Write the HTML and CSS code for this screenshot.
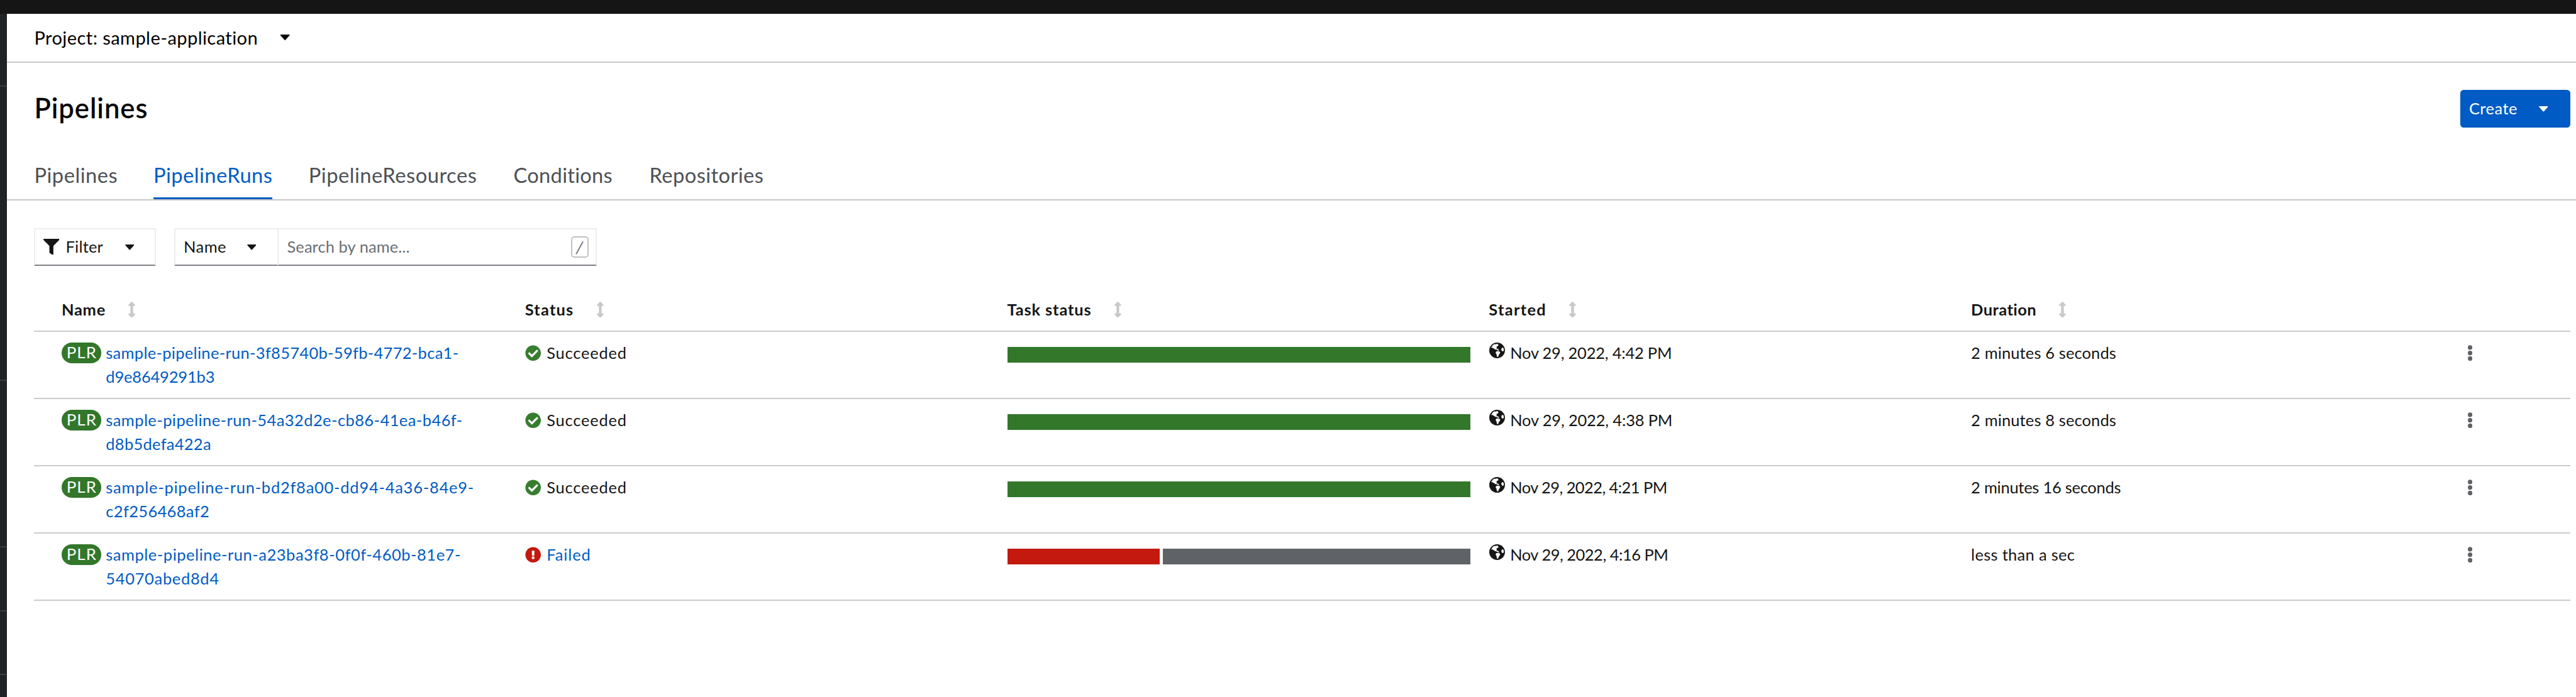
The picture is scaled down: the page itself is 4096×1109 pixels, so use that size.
FILE: index.html
```html
<!DOCTYPE html>
<html lang="en">
<head>
<meta charset="utf-8">
<title>Pipelines</title>
<link rel="stylesheet" href="styles.css">
</head>
<body>
<svg class="sprite" aria-hidden="true">
  <symbol id="caret" viewBox="0 0 16 10"><path d="M1 0H15Q16.400 .5 15.400 1.700L9 8.800Q8 9.900 7 8.800L.6 1.700Q-.4 .5 1 0z"/></symbol>
  <symbol id="sort" viewBox="0 0 12 28"><path d="M5 .5Q6-.3 7 .5L11.500 5.200Q12.600 7.200 11 7.300H8.400V20.700H11Q12.600 20.800 11.500 22.800L7 27.500Q6 28.300 5 27.500L.5 22.800Q-.6 20.800 1 20.700H3.600V7.300H1Q-.6 7.200 .5 5.200z"/></symbol>
  <symbol id="funnel" viewBox="0 0 512 512"><path d="M487.976 0H24.028C2.710 0-8.047 25.866 7.058 40.971L192 225.941V432c0 7.831 3.821 15.170 10.237 19.662l80 55.980C298.020 518.690 320 507.493 320 487.980V225.941l184.947-184.970C520.021 25.896 509.338 0 487.976 0z"/></symbol>
  <symbol id="check" viewBox="0 0 512 512"><path d="M504 256c0 136.967-111.033 248-248 248S8 392.967 8 256 119.033 8 256 8s248 111.033 248 248zM227.314 387.314l184-184c6.248-6.248 6.248-16.379 0-22.627l-22.627-22.627c-6.248-6.249-16.379-6.249-22.628 0L216 308.118l-70.059-70.059c-6.248-6.248-16.379-6.248-22.628 0l-22.627 22.627c-6.248 6.248-6.248 16.379 0 22.627l104 104c6.249 6.249 16.379 6.249 22.628.001z"/></symbol>
  <symbol id="alert" viewBox="0 0 512 512"><path d="M504 256c0 136.997-111.043 248-248 248S8 392.997 8 256C8 119.083 119.043 8 256 8s248 111.083 248 248zm-248 50c-25.405 0-46 20.595-46 46s20.595 46 46 46 46-20.595 46-46-20.595-46-46-46zm-43.673-165.346l7.418 136c.347 6.364 5.609 11.346 11.982 11.346h48.546c6.373 0 11.635-4.982 11.982-11.346l7.418-136c.375-6.874-5.098-12.654-11.982-12.654h-63.383c-6.884 0-12.356 5.780-11.981 12.654z"/></symbol>
  <symbol id="globe" viewBox="0 0 82 82"><circle cx="41" cy="41" r="41"/><path fill="#fff" d="M10 27L19 13 27 8 33 10 37 7 46 8 48 15 44 20 37 21 40 27 37 33 44 34 49 37 52 42 46 42 39 38 31 36 24 31 17 27z M37 46L50 45 57 50 56 57 50 64 47 74 40 75 38 61 33 53z M63 34L67 27 73 27 76 35 75 44 69 46 64 41z"/></symbol>
  <symbol id="kebab" viewBox="0 0 8 28"><circle cx="4" cy="4.300" r="4"/><circle cx="4" cy="14" r="4"/><circle cx="4" cy="23.700" r="4"/></symbol>
</svg>

<header class="masthead"></header>
<div class="shell">
  <nav class="sidebar">
    <div class="side-block side-first"></div>
    <div class="side-block side-long"></div>
    <div class="side-block side-mid"></div>
    <div class="side-block side-item"></div>
    <div class="side-block side-item"></div>
  </nav>
  <main class="main">
    <div class="project-bar">
      <span class="project-name">Project: sample-application</span>
      <svg class="caret"><use href="#caret"/></svg>
    </div>

    <div class="page-head">
      <h1 class="title">Pipelines</h1>
      <button class="create"><span>Create</span><svg class="caret"><use href="#caret"/></svg></button>
    </div>

    <nav class="tabs">
      <a class="tab tab-pipelines">Pipelines</a>
      <a class="tab tab-runs active">PipelineRuns</a>
      <a class="tab tab-resources">PipelineResources</a>
      <a class="tab tab-conditions">Conditions</a>
      <a class="tab tab-repos">Repositories</a>
    </nav>

    <div class="toolbar">
      <div class="control filter"><svg class="funnel"><use href="#funnel"/></svg><span class="label">Filter</span><svg class="caret"><use href="#caret"/></svg></div>
      <div class="control kind"><span class="label">Name</span><svg class="caret"><use href="#caret"/></svg></div>
      <div class="control search"><span class="placeholder">Search by name...</span><kbd class="key"><span>/</span></kbd></div>
    </div>

    <section class="table">
      <div class="row head">
        <div class="th"><span class="h-name">Name</span><svg class="sort"><use href="#sort"/></svg></div>
        <div class="th"><span class="h-status">Status</span><svg class="sort"><use href="#sort"/></svg></div>
        <div class="th"><span class="h-task">Task status</span><svg class="sort"><use href="#sort"/></svg></div>
        <div class="th"><span class="h-started">Started</span><svg class="sort"><use href="#sort"/></svg></div>
        <div class="th"><span class="h-duration">Duration</span><svg class="sort"><use href="#sort"/></svg></div>
      </div>

      <div class="row run-a">
        <div class="name"><span class="badge">PLR</span><a class="link"><span class="top">sample-pipeline-run-3f85740b-59fb-4772-bca1-</span><span class="end">d9e8649291b3</span></a></div>
        <div class="status"><svg class="state ok"><use href="#check"/></svg><span>Succeeded</span></div>
        <div class="progress"><i class="bar done" style="width:100%"></i></div>
        <div class="started"><svg class="globe"><use href="#globe"/></svg><span>Nov 29, 2022, 4:42 PM</span></div>
        <div class="duration">2 minutes 6 seconds</div>
        <svg class="kebab"><use href="#kebab"/></svg>
      </div>

      <div class="row run-b">
        <div class="name"><span class="badge">PLR</span><a class="link"><span class="top">sample-pipeline-run-54a32d2e-cb86-41ea-b46f-</span><span class="end">d8b5defa422a</span></a></div>
        <div class="status"><svg class="state ok"><use href="#check"/></svg><span>Succeeded</span></div>
        <div class="progress"><i class="bar done" style="width:100%"></i></div>
        <div class="started"><svg class="globe"><use href="#globe"/></svg><span>Nov 29, 2022, 4:38 PM</span></div>
        <div class="duration">2 minutes 8 seconds</div>
        <svg class="kebab"><use href="#kebab"/></svg>
      </div>

      <div class="row run-c">
        <div class="name"><span class="badge">PLR</span><a class="link"><span class="top">sample-pipeline-run-bd2f8a00-dd94-4a36-84e9-</span><span class="end">c2f256468af2</span></a></div>
        <div class="status"><svg class="state ok"><use href="#check"/></svg><span>Succeeded</span></div>
        <div class="progress"><i class="bar done" style="width:100%"></i></div>
        <div class="started"><svg class="globe"><use href="#globe"/></svg><span>Nov 29, 2022, 4:21 PM</span></div>
        <div class="duration">2 minutes 16 seconds</div>
        <svg class="kebab"><use href="#kebab"/></svg>
      </div>

      <div class="row run-d">
        <div class="name"><span class="badge">PLR</span><a class="link"><span class="top">sample-pipeline-run-a23ba3f8-0f0f-460b-81e7-</span><span class="end">54070abed8d4</span></a></div>
        <div class="status failed"><svg class="state bad"><use href="#alert"/></svg><span>Failed</span></div>
        <div class="progress"><i class="bar error" style="width:32.900%"></i><i class="bar pending" style="width:66.350%"></i></div>
        <div class="started"><svg class="globe"><use href="#globe"/></svg><span>Nov 29, 2022, 4:16 PM</span></div>
        <div class="duration">less than a sec</div>
        <svg class="kebab"><use href="#kebab"/></svg>
      </div>
    </section>
  </main>
</div>
</body>
</html>
```
FILE: styles.css
```css
/* 1rem = 100 design pixels */
html { font-size: 90.74px; }
* { box-sizing: border-box; }
body {
  margin: 0;
  height: 1109px;
  overflow: hidden;
  display: flex;
  flex-direction: column;
  background: #fff;
  color: #151515;
  font-family: Lato, "Open Sans", sans-serif;
  font-size: .28rem;
  line-height: .42rem;
  white-space: nowrap;
}
svg { display: block; flex: none; fill: currentColor; }
.sprite { position: absolute; width: 0; height: 0; }

.masthead { flex: none; height: .24rem; background: #151515; }
.shell { flex: 1; display: flex; min-height: 0; }
.sidebar { flex: none; width: .12rem; background: #1f2326; overflow: hidden; }
.side-block { border-bottom: 2px solid #3a3d40; }
.side-first { height: 1.28rem; }
.side-long { height: 5.16rem; }
.side-mid { height: 2.92rem; }
.side-item { height: 1.12rem; }
.main { flex: 1; min-width: 0; }

.caret { width: .16rem; height: .1rem; }

.project-bar {
  display: flex;
  align-items: center;
  height: .86rem;
  padding: 0 0 0 .48rem;
  border-bottom: 2px solid #c7c7c7;
  color: #000;
  font-size: .32rem;
}
.project-name { width: 4.3rem; letter-spacing: .0049rem; }
.project-bar .caret { width: .18rem; height: .105rem; }

.page-head {
  display: flex;
  align-items: center;
  justify-content: space-between;
  margin-top: .48rem;
  padding: 0 .1rem 0 .48rem;
}
.title {
  margin: 0 0 .04rem;
  color: #000;
  font-size: .48rem;
  line-height: .58rem;
  font-weight: 500;
  letter-spacing: .0112rem;
  -webkit-text-stroke: .3px #000;
}
.create {
  display: flex;
  align-items: center;
  width: 1.93rem;
  height: .66rem;
  padding: 0 .16rem 0 .155rem;
  border: 0;
  border-radius: .06rem;
  background: #005bc4;
  color: #fff;
  font: inherit;
  letter-spacing: .006rem;
}
.create span { width: 1.23rem; padding-bottom: .02rem; text-align: left; }

.tabs {
  display: flex;
  gap: .64rem;
  height: .92rem;
  margin-top: .36rem;
  padding-left: .48rem;
  border-bottom: 2px solid #c7c7c7;
  font-size: .36rem;
  line-height: .54rem;
  color: #4d5054;
}
.tab { padding-top: .205rem; border-bottom: .04rem solid transparent; }
.tab.active { color: #005bc4; border-color: #005bc4; }
.tab-pipelines { width: 1.45rem; letter-spacing: .0058rem; }
.tab-runs { width: 2.08rem; letter-spacing: .0051rem; }
.tab-resources { width: 2.95rem; letter-spacing: .0056rem; }
.tab-conditions { width: 1.74rem; letter-spacing: .0029rem; }
.tab-repos { letter-spacing: .0046rem; }

.toolbar { display: flex; margin: .48rem 0 0 .48rem; }
.control {
  display: flex;
  align-items: center;
  height: .66rem;
  border: 2px solid #ededed;
  border-bottom-color: #7d8185;
}
.control .label, .placeholder { padding-bottom: .01rem; }
.filter { width: 2.13rem; margin-right: .325rem; padding-left: .14rem; }
.funnel { width: .28rem; height: .28rem; }
.filter .label { width: 1.02rem; margin-left: .11rem; margin-right: .02rem; letter-spacing: .0027rem; }
.kind { width: 1.81rem; padding-left: .14rem; border-right: 0; }
.kind .label { width: 1.11rem; letter-spacing: .0063rem; }
.control .caret { margin-top: .02rem; }
.search { width: 5.59rem; padding: 0 .12rem 0 .145rem; justify-content: space-between; }
.placeholder { color: #6a6e73; letter-spacing: .0012rem; }
.key {
  display: flex;
  align-items: center;
  justify-content: center;
  width: .31rem;
  height: .37rem;
  border: 2px solid #c2c2c2;
  border-radius: .055rem;
  color: #5c6066;
  font: inherit;
}
.key span { transform: skewX(-8deg); }

.table { margin: .38rem .1rem 0 .48rem; }
.row {
  display: grid;
  grid-template-columns: 8.12rem 8.45rem 8.44rem 8.45rem 8.7rem auto;
  height: 1.18rem;
  padding: .155rem 0 0 .48rem;
  border-bottom: 2px solid #cbcbcb;
}
.row.head { height: .78rem; padding-top: 0; align-items: center; font-weight: 700; }
.th { display: flex; align-items: center; gap: .4rem; }
.sort { width: .12rem; height: .28rem; margin-top: .02rem; color: #c9c9c9; }
.h-name { letter-spacing: .0084rem; }
.h-status { letter-spacing: .0132rem; }
.h-task { letter-spacing: .0096rem; }
.h-started { letter-spacing: .0144rem; }
.h-duration { letter-spacing: .005rem; }

.name, .status, .started { display: flex; align-items: flex-start; }
.badge {
  width: .69rem;
  height: .36rem;
  margin: .035rem .085rem 0 0;
  border-radius: .18rem;
  background: #32772a;
  color: #fff;
  font-size: .285rem;
  line-height: .35rem;
  text-align: center;
  letter-spacing: .012rem;
  text-indent: .012rem;
}
.link { color: #005bc4; }
.link span { display: block; }

.state { width: .28rem; height: .28rem; margin: .075rem .1rem 0 0; }
.ok { color: #377d2f; }
.bad { color: #c4190e; }
.status { letter-spacing: .009rem; }
.failed { color: #005bc4; letter-spacing: .0103rem; }

.progress { display: flex; justify-content: space-between; width: 8.12rem; height: .28rem; margin-top: .105rem; }
.bar { height: 100%; }
.done { background: #32772a; }
.error { background: #c4190e; }
.pending { background: #5f6267; }

.globe { width: .275rem; height: .275rem; margin: .035rem .095rem 0 .003rem; }
.kebab { width: .08rem; height: .28rem; margin-top: .075rem; color: #5f6267; }

.run-a .top { letter-spacing: .0038rem; }
.run-a .end { letter-spacing: -.0013rem; }
.run-a .started { letter-spacing: -.0019rem; }
.run-a .duration, .run-b .duration { letter-spacing: .0018rem; }
.run-b .top { letter-spacing: .0052rem; }
.run-b .end { letter-spacing: .0036rem; }
.run-b .started { letter-spacing: -.0014rem; }
.run-c .top { letter-spacing: .0088rem; }
.run-c .end { letter-spacing: .0042rem; }
.run-c .started { letter-spacing: -.0059rem; }
.run-c .duration { letter-spacing: -.0024rem; }
.run-d .top { letter-spacing: .0063rem; }
.run-d .end { letter-spacing: .008rem; }
.run-d .started { letter-spacing: -.005rem; }
.run-d .duration { letter-spacing: .0037rem; }
```
